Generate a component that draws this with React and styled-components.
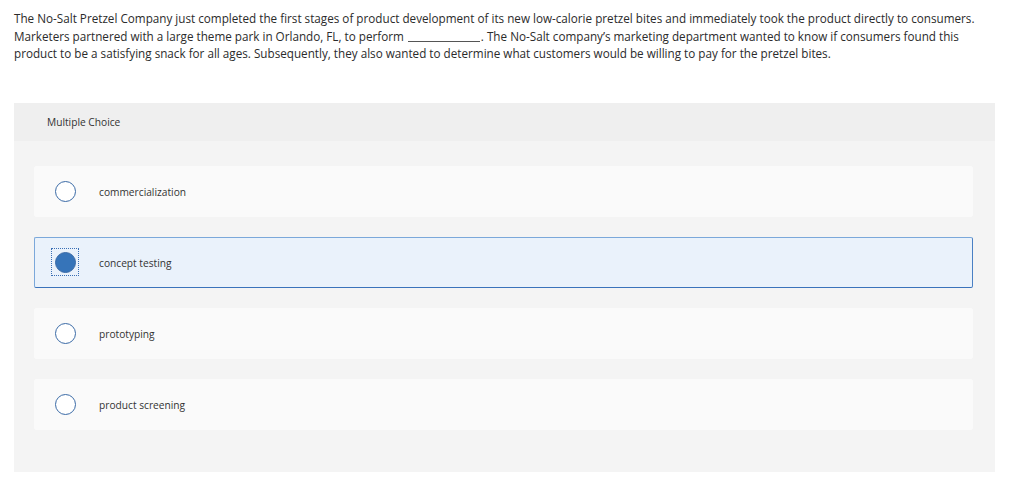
import React from 'react';
import styled, { createGlobalStyle } from 'styled-components';

const GlobalStyle = createGlobalStyle`
  body {
    margin: 0;
    background: #ffffff;
    font-family: "Open Sans", "Liberation Sans", sans-serif;
    color: #2b2b2b;
  }
`;

const OPTIONS = [
  'commercialization',
  'concept testing',
  'prototyping',
  'product screening',
];

const Page = styled.div`
  width: 1024px;
  height: 496px;
  padding: 10px 29px 0 14px;
  box-sizing: border-box;
`;

const Question = styled.p`
  margin: 0;
  font-size: 11.7px;
  line-height: 17.5px;
  color: #2b2b2b;
`;

const Blank = styled.span`
  display: inline-block;
  width: 72px;
  border-bottom: 1px solid #555;
  margin: 0 1px;
  vertical-align: -1px;
`;

const Panel = styled.section`
  margin-top: 40px;
  width: 981px;
  background: #f4f4f4;
  padding-bottom: 42px;
`;

const PanelHeader = styled.div`
  height: 38px;
  display: flex;
  align-items: center;
  padding-left: 33px;
  background: #efefef;
  font-size: 10.2px;
  color: #333;
`;

const OptionList = styled.div`
  display: flex;
  flex-direction: column;
  gap: 20px;
  padding: 25px 22px 0 20px;
`;

const Option = styled.label`
  height: 51px;
  box-sizing: border-box;
  display: flex;
  align-items: center;
  gap: 23px;
  padding-left: 19px;
  border: 1px solid ${p => (p.selected ? '#7ba8da' : '#fafafa')};
  border-bottom-color: ${p => (p.selected ? '#3b73bb' : '#fafafa')};
  border-right-color: ${p => (p.selected ? '#4a80c4' : '#fafafa')};
  border-radius: 2px;
  background: ${p => (p.selected ? '#eaf2fb' : '#fafafa')};
  font-size: 10.2px;
  color: #333;
`;

const OptionText = styled.span`
  padding-top: 2px;
`;

const RadioWrap = styled.span`
  width: 22px;
  height: 22px;
  display: flex;
  align-items: center;
  justify-content: center;
  outline: ${p => (p.focused ? '1px dotted #3a6fb5' : 'none')};
  outline-offset: 2px;
`;

const Radio = styled.span`
  width: 21px;
  height: 21px;
  box-sizing: border-box;
  border-radius: 50%;
  border: 1px solid #3a6aa6;
  background: ${p => (p.checked ? '#3674b9' : '#ffffff')};
`;

export default function App() {
  const selected = 1;
  return (
    <>
      <GlobalStyle />
      <Page>
        <Question>
          The No-Salt Pretzel Company just completed the first stages of product development of its new low-calorie pretzel bites and immediately took the product directly to consumers.
          <br />
          Marketers partnered with a large theme park in Orlando, FL, to perform <Blank />. The No-Salt company’s marketing department wanted to know if consumers found this
          <br />
          product to be a satisfying snack for all ages. Subsequently, they also wanted to determine what customers would be willing to pay for the pretzel bites.
        </Question>
        <Panel>
          <PanelHeader>Multiple Choice</PanelHeader>
          <OptionList>
            {OPTIONS.map((text, i) => (
              <Option key={text} selected={i === selected}>
                <RadioWrap focused={i === selected}>
                  <Radio checked={i === selected} />
                </RadioWrap>
                <OptionText>{text}</OptionText>
              </Option>
            ))}
          </OptionList>
        </Panel>
      </Page>
    </>
  );
}
